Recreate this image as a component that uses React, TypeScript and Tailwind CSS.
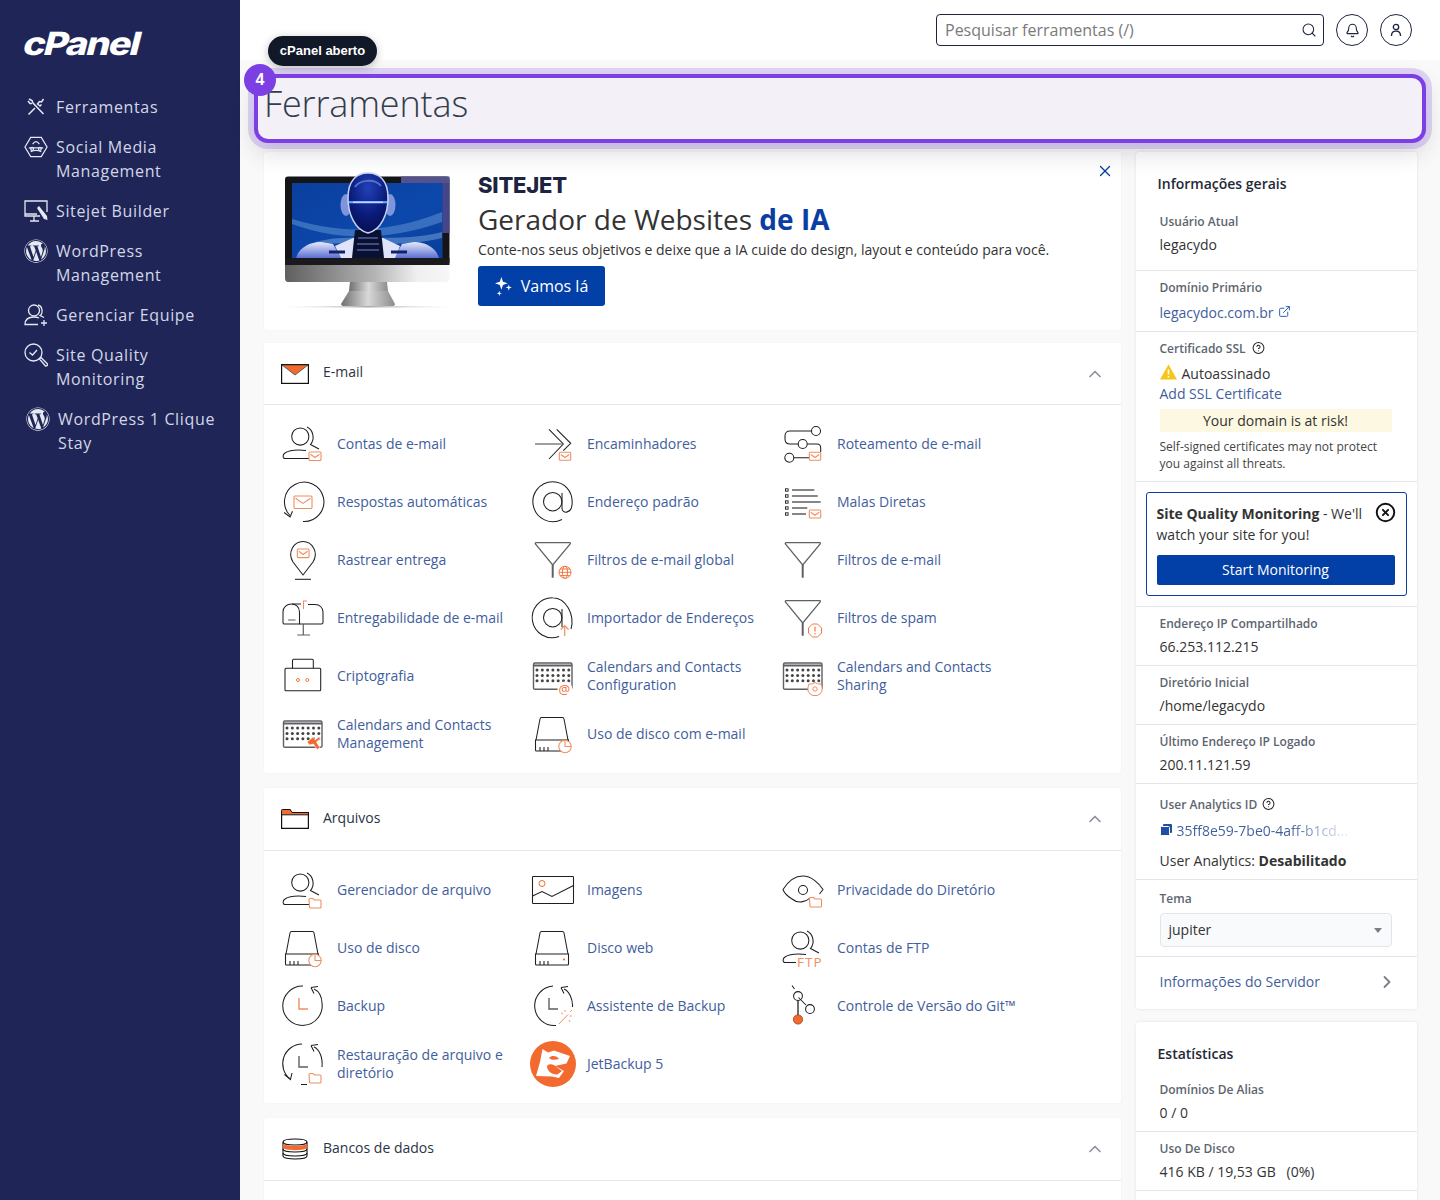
import { Bell, ChevronRight, ChevronUp, CircleHelp, CircleX, ExternalLink, Search, X } from "lucide-react";
import { FaWordpress } from "react-icons/fa";
import type { ReactNode } from "react";

const K = "#1f1f22";
const G = "#5f5f64";
const O = "#ee8f62";
const R = "#f26a2e";

// small orange overlays used by most of the tool icons
function Env({ x, y, w = 12, h = 8.5 }: { x: number; y: number; w?: number; h?: number }) {
  return (
    <g fill="#fff" stroke={O} strokeWidth="1.1">
      <rect x={x} y={y} width={w} height={h} rx="1" />
      <path d={`M${x + 1.5} ${y + 2.2} L${x + w / 2} ${y + h / 2 + 1.2} L${x + w - 1.5} ${y + 2.2}`} fill="none" />
    </g>
  );
}

function Folder({ x, y }: { x: number; y: number }) {
  return (
    <path
      d={`M${x} ${y + 1.5} a1 1 0 0 1 1 -1 h3 l1.5 1.5 h5.5 a1 1 0 0 1 1 1 v6 a1 1 0 0 1 -1 1 h-9.5 a1 1 0 0 1 -1 -1 z`}
      fill="#fff"
      stroke={O}
      strokeWidth="1.1"
    />
  );
}

function Person({ short }: { short?: boolean }) {
  return (
    <g fill="none" stroke={K} strokeWidth="1.05">
      <circle cx="18.3" cy="13.5" r="8.6" />
      <path d="M25 4 C31.5 7 33 16 28.5 21.5 L37 26" />
      <path d={short ? "M14 35.5 H3 C0.5 35.5 0.5 31.5 3 30 C7.5 27 14 26.5 24 27.5" : "M27 35.5 H3 C0.5 35.5 0.5 31.5 3 30 C7.5 27 14 26.5 24 27.5"} />
    </g>
  );
}

function Funnel() {
  return (
    <g fill="none">
      <path d="M4 3.7 H37.8 Q38.8 3.7 38.2 5 L20.7 26 L3.4 5 Q2.9 3.7 4 3.7 Z" stroke={G} strokeWidth="1.2" />
      <path d="M20.7 26 V38.7" stroke={G} strokeWidth="2" />
    </g>
  );
}

function Cal() {
  const dots = [];
  for (let r = 0; r < 3; r++) {
    for (let c = 0; c < 7; c++) {
      dots.push(<circle key={`${r}-${c}`} cx={5 + c * 5.3} cy={15 + r * 5.4} r="1.5" fill="#444" />);
    }
  }
  return (
    <g>
      <path d="M1.5 33 V9.5 Q1.5 8 3 8 H38.5 Q40 8 40 9.5 V33 Q40 34.2 38.5 34.2 H3 Q1.5 34.2 1.5 33 Z" fill="none" stroke={G} strokeWidth="1.4" />
      <path d="M1.5 10.5 H40" stroke={G} strokeWidth="1.8" />
      {dots}
    </g>
  );
}

function Disk() {
  return (
    <g fill="none" stroke={K} strokeWidth="1.05">
      <path d="M4 27 L8 6 Q8.3 4.5 9.5 4.5 H30.5 Q31.7 4.5 32 6 L36 27" />
      <path d="M3.5 27 H36.5 V37 Q36.5 38 35.5 38 H4.5 Q3.5 38 3.5 37 Z" />
      <path d="M8 38 V34 M12 38 V34 M16 38 V34" />
    </g>
  );
}

function Clock({ hand = K }: { hand?: string }) {
  return <path d="M17 13 V24 H26" fill="none" stroke={hand} strokeWidth="1.4" />;
}

function Wrap({ children }: { children: ReactNode }) {
  return (
    <svg width="42" height="42" viewBox="0 0 42 42" className="shrink-0 overflow-visible">
      {children}
    </svg>
  );
}

const icons: Record<string, ReactNode> = {
  contas: (
    <>
      <Person />
      <Env x={27} y={29} />
    </>
  ),
  respostas: (
    <>
      <path d="M8 34.5 A19.7 19.7 0 1 1 21 40.5" fill="none" stroke={K} strokeWidth="1.05" />
      <path d="M2.5 30.5 L7.5 36 L11 31" fill="none" stroke={K} strokeWidth="1.05" transform="rotate(-12 7 33)" />
      <Env x={12} y={15} w={18} h={12.5} />
    </>
  ),
  rastrear: (
    <>
      <path d="M21 36 L11 23 C5 13 12 2.5 21 2.5 C30 2.5 37 13 31 23 Z" fill="none" stroke={K} strokeWidth="1.05" />
      <path d="M13 40.3 H29" stroke={K} strokeWidth="1.05" />
      <Env x={15.3} y={10} w={11.7} h={8.6} />
    </>
  ),
  entrega: (
    <>
      <path d="M1 25.5 V15 C1 10 5 7 9.5 7 C14 7 17.5 10 17.5 15 V27 H2.5 Q1 27 1 25.5 Z" fill="none" stroke={K} strokeWidth="1.05" />
      <path d="M10 7 H19 M26 7.5 H33 C38 7.5 41 11 41 15 V25.5 Q41 27 39.5 27 H17.5" fill="none" stroke={K} strokeWidth="1.05" />
      <path d="M21.3 27 V38 M15.3 38 H28 M6 23 H13.5" stroke={G} strokeWidth="1.2" />
      <path d="M21.5 12 V4 H25" fill="none" stroke={O} strokeWidth="1.1" />
    </>
  ),
  cripto: (
    <>
      <path d="M10.5 13.3 V5.5 Q10.5 4.3 11.7 4.3 H30 Q31.3 4.3 31.3 5.5 V13.3" fill="none" stroke={K} strokeWidth="1.05" />
      <rect x="3" y="13.3" width="35.7" height="22.4" rx="1" fill="none" stroke={K} strokeWidth="1.05" />
      <circle cx="16" cy="25" r="1.5" fill="none" stroke={R} strokeWidth="0.9" />
      <circle cx="25.3" cy="25" r="1.5" fill="none" stroke={R} strokeWidth="0.9" />
    </>
  ),
  calManage: (
    <>
      <Cal />
      <path d="M25 29 L31 24 L33 27 L37 24 L38 26 L34.5 29 L38 35 L35 36.5 L31.5 31 L27.5 32 Z" fill={R} stroke="#fff" strokeWidth="0.6" />
    </>
  ),
  enc: (
    <g fill="none">
      <path d="M3 21 H29.7" stroke={G} strokeWidth="1.2" />
      <path d="M17 6.3 L31.3 21 L17 36" stroke={K} strokeWidth="1.05" />
      <path d="M24.7 6.3 L38.7 20.3 L31.3 27.7" stroke={K} strokeWidth="1.05" />
      <Env x={27.3} y={29.3} w={11.4} h={8} />
    </g>
  ),
  at: (
    <g fill="none" stroke={K} strokeWidth="1.05">
      <circle cx="20.7" cy="20.7" r="9.2" />
      <path d="M30 12 V27 C30 33 39 33 40 24 C41.5 10 32 0.7 20.7 0.7 A20 20 0 1 0 30 38.5" />
    </g>
  ),
  filtroGlobal: (
    <>
      <Funnel />
      <g fill="#fff" stroke={R} strokeWidth="0.9">
        <circle cx="33" cy="33.3" r="6" />
        <ellipse cx="33" cy="33.3" rx="2.6" ry="6" />
        <path d="M27 33.3 H39 M28 30 H38 M28 36.6 H38" />
      </g>
    </>
  ),
  importer: (
    <g fill="none" stroke={K} strokeWidth="1.05">
      <circle cx="20.7" cy="20.7" r="9.2" />
      <path d="M30 12 V30 M39 32 C43 18 34 0.7 20.7 0.7 A20 20 0 1 0 27 39.5" />
      <path d="M32.7 39 V28.5 M28.8 32.5 L32.7 28.5 L36.6 32.5" stroke={O} strokeWidth="1.2" />
    </g>
  ),
  calConfig: (
    <>
      <Cal />
      <circle cx="33" cy="34" r="7.5" fill="#fff" />
      <text x="26.6" y="38.6" fill={R} fontSize="13" fontFamily="'Open Sans', sans-serif">
        @
      </text>
    </>
  ),
  diskMail: (
    <>
      <Disk />
      <circle cx="33" cy="33.5" r="6.2" fill="#fff" stroke={O} strokeWidth="1.1" />
      <path d="M33 27.3 V33.5 H39.2" fill="none" stroke={O} strokeWidth="1.1" />
    </>
  ),
  rota: (
    <g fill="none" stroke={K} strokeWidth="1.05">
      <path d="M29.5 8 H8 Q3 8 3 13 V16 Q3 21 8 21 H16 M25.3 21 H35 Q38.7 21 38.7 25 V29 M12 34.7 H27" />
      <circle cx="34" cy="8" r="4.5" />
      <circle cx="20.7" cy="21" r="4.5" />
      <circle cx="7.3" cy="34.7" r="4.5" />
      <Env x={27.3} y={29.3} w={11.4} h={8} />
    </g>
  ),
  malas: (
    <g fill="none">
      {[9, 15, 21, 27, 33].map((y) => (
        <rect key={y} x="3.5" y={y - 1.2} width="2.6" height="2.4" stroke={K} strokeWidth="0.9" />
      ))}
      <path d="M10 9 H32.3 M10 15 H35.7 M10 21 H38.7 M10 27 H25.3 M10 33 H24" stroke={G} strokeWidth="1.4" />
      <Env x={27.3} y={29} w={11.4} h={8} />
    </g>
  ),
  filtro: <Funnel />,
  spam: (
    <>
      <Funnel />
      <path d="M30.5 27 H35.5 L39.5 31 V36 L35.5 40 H30.5 L26.5 36 V31 Z" fill="#fff" stroke={R} strokeWidth="0.9" />
      <path d="M33 29.7 V34.5 M33 36 V37.3" stroke={R} strokeWidth="1.1" />
    </>
  ),
  calShare: (
    <>
      <Cal />
      <path d="M33 27.5 L36 29 L39 29 L40 32 L40 36 L38 39 L35 40.5 L31 40.5 L28 39 L26 36 L26 32 L27 29 L30 29 Z" fill="#fff" stroke={O} strokeWidth="1" />
      <circle cx="33" cy="34" r="2.2" fill="none" stroke={O} strokeWidth="1" />
    </>
  ),
  gerenciador: (
    <>
      <Person />
      <Folder x={27} y={29} />
    </>
  ),
  imagens: (
    <g fill="none">
      <rect x="0.5" y="7.5" width="41" height="27" rx="0.8" stroke={K} strokeWidth="1.05" />
      <circle cx="10" cy="14.5" r="3" stroke={R} strokeWidth="1" />
      <path d="M0.5 27 L10 22.5 L20 27.5 L41.5 16.5" stroke={K} strokeWidth="1.05" />
    </g>
  ),
  privacidade: (
    <g fill="none">
      <path d="M28 29 C24 33 16 35 10 30 C6 27.5 2 23.5 1 20.5 C5 14 12 7 21 7 C29 7 37 14 41 20.5 L37.5 25" stroke={K} strokeWidth="1.05" />
      <circle cx="21" cy="21" r="4.5" stroke={K} strokeWidth="1.05" />
      <Folder x={27.5} y={28} />
    </g>
  ),
  usoDisco: (
    <>
      <Disk />
      <circle cx="33" cy="33.5" r="6.2" fill="#fff" stroke={O} strokeWidth="1.1" />
      <path d="M33 27.3 V33.5 H39.2" fill="none" stroke={O} strokeWidth="1.1" />
    </>
  ),
  discoWeb: (
    <>
      <Disk />
      <circle cx="32" cy="32.5" r="1.1" fill={R} />
    </>
  ),
  ftp: (
    <>
      <Person short />
      <text x="15" y="39.5" fill={O} fontSize="13.5" fontFamily="'Open Sans', sans-serif" letterSpacing="1">
        FTP
      </text>
    </>
  ),
  backup: (
    <g fill="none">
      <path d="M21 1 A19.7 19.7 0 1 0 40 18 C40 12 37 6 32 4" stroke={K} strokeWidth="1.05" />
      <path d="M29 2.5 L32 8.5 M29 2.5 L36 1.5" stroke={K} strokeWidth="1.05" />
      <Clock hand={O} />
    </g>
  ),
  assistente: (
    <g fill="none">
      <path d="M21 1 A19.7 19.7 0 1 0 24 40.5 M40.5 22 C41 14 37 6 32 4" stroke={K} strokeWidth="1.05" />
      <path d="M29 2.5 L32 8.5 M29 2.5 L36 1.5" stroke={K} strokeWidth="1.05" />
      <Clock hand={G} />
      <path d="M27 39 L36 29.5" stroke={O} strokeWidth="1" />
      <path d="M33 27 V25 M37.5 31 H40 M38 27 L40 25 M31 29 L29 28 M37 35 L38 37" stroke={O} strokeWidth="0.9" />
    </g>
  ),
  git: (
    <g fill="none">
      <path d="M10 0.5 L12.5 4 M16.5 12.5 L24 20" stroke={K} strokeWidth="1.05" />
      <path d="M16 15.5 V30" stroke={G} strokeWidth="1.8" />
      <circle cx="16" cy="11" r="4.4" stroke={K} strokeWidth="1.05" />
      <circle cx="28" cy="24" r="4.4" stroke={K} strokeWidth="1.05" />
      <circle cx="16" cy="34.5" r="4.6" fill={R} stroke="#9a3d14" strokeWidth="0.8" />
    </g>
  ),
  restaura: (
    <g fill="none">
      <path d="M20 1 A19.7 19.7 0 0 0 8 36" stroke={K} strokeWidth="1.05" />
      <path d="M2.5 31.5 L8.5 36.5 L10 30" stroke={K} strokeWidth="1.05" />
      <path d="M19 41.5 H25 M40 24 C41 14 37 6 32 4" stroke={K} strokeWidth="1.05" />
      <path d="M29 2.5 L32 8.5 M29 2.5 L36 1.5" stroke={K} strokeWidth="1.05" />
      <Clock hand={G} />
      <Folder x={27} y={30} />
    </g>
  ),
  jet: (
    <svg width="46" height="46" viewBox="0 0 46 46" className="shrink-0 -mx-[2px] -my-[2px]">
      <circle cx="23" cy="23" r="23" fill={R} />
      <path
        d="M6 35 L10 21 L12.5 8 L18 11.5 L24 9.5 L40 15 L36.5 22.5 L25 25 L34 30 L29 37 L22 35.5 Z"
        fill="#fff"
      />
      <path d="M19 17 C22 13.5 27 15 29 18 C25 19 22 19.5 19 17 Z" fill={R} />
      <path d="M17 25 C19 22 24 23 27 26.5 L32 30 L27.5 33.5 C22 34 17 30 17 25 Z" fill={R} />
    </svg>
  ),
};

type Tool = { icon: string; label: string };

const emailTools: Tool[] = [
  { icon: "contas", label: "Contas de e-mail" },
  { icon: "enc", label: "Encaminhadores" },
  { icon: "rota", label: "Roteamento de e-mail" },
  { icon: "respostas", label: "Respostas automáticas" },
  { icon: "at", label: "Endereço padrão" },
  { icon: "malas", label: "Malas Diretas" },
  { icon: "rastrear", label: "Rastrear entrega" },
  { icon: "filtroGlobal", label: "Filtros de e-mail global" },
  { icon: "filtro", label: "Filtros de e-mail" },
  { icon: "entrega", label: "Entregabilidade de e-mail" },
  { icon: "importer", label: "Importador de Endereços" },
  { icon: "spam", label: "Filtros de spam" },
  { icon: "cripto", label: "Criptografia" },
  { icon: "calConfig", label: "Calendars and Contacts Configuration" },
  { icon: "calShare", label: "Calendars and Contacts Sharing" },
  { icon: "calManage", label: "Calendars and Contacts Management" },
  { icon: "diskMail", label: "Uso de disco com e-mail" },
];

const fileTools: Tool[] = [
  { icon: "gerenciador", label: "Gerenciador de arquivo" },
  { icon: "imagens", label: "Imagens" },
  { icon: "privacidade", label: "Privacidade do Diretório" },
  { icon: "usoDisco", label: "Uso de disco" },
  { icon: "discoWeb", label: "Disco web" },
  { icon: "ftp", label: "Contas de FTP" },
  { icon: "backup", label: "Backup" },
  { icon: "assistente", label: "Assistente de Backup" },
  { icon: "git", label: "Controle de Versão do Git™" },
  { icon: "restaura", label: "Restauração de arquivo e diretório" },
  { icon: "jet", label: "JetBackup 5" },
];

function ToolGrid({ tools }: { tools: Tool[] }) {
  return (
    <div className="grid grid-cols-[250px_250px_250px] px-[18px] py-[10px]">
      {tools.map((t) => (
        <a key={t.label} className="flex h-[58px] items-center gap-[13px]">
          {t.icon === "jet" ? icons.jet : <Wrap>{icons[t.icon]}</Wrap>}
          <span className="w-[180px] text-[14px] leading-[18px] text-[#3f5e9c]">{t.label}</span>
        </a>
      ))}
    </div>
  );
}

function Section({ icon, title, first, children }: { icon: ReactNode; title: string; first?: boolean; children?: ReactNode }) {
  return (
    <section className="rounded-[3px] bg-white shadow-[0_0_2px_rgba(0,0,0,0.05)]">
      <div className={`flex items-center gap-[14px] border-b border-[#e5e6ea] pr-[16px] pl-[17px] ${first ? "h-[62px]" : "h-[63px]"}`}>
        <span className="flex w-[28px] justify-center">{icon}</span>
        <span className={`flex-1 text-[14px] text-[#2b3445] ${first ? "mb-[4px]" : "mb-[3px]"}`}>{title}</span>
        <ChevronUp size={20} strokeWidth={2} className="text-[#8d929b]" />
      </div>
      {children}
    </section>
  );
}

function Sparkle() {
  return (
    <svg width="17" height="19" viewBox="0 0 16 18" fill="#fff">
      <path d="M6 0 L7.5 4.5 L12 6 L7.5 7.5 L6 12 L4.5 7.5 L0 6 L4.5 4.5 Z" />
      <path d="M13 7 L13.7 9.3 L16 10 L13.7 10.7 L13 13 L12.3 10.7 L10 10 L12.3 9.3 Z" />
      <path d="M4 13 L4.6 14.9 L6.5 15.5 L4.6 16.1 L4 18 L3.4 16.1 L1.5 15.5 L3.4 14.9 Z" />
    </svg>
  );
}

function RobotMonitor() {
  return (
    <svg width="168" height="140" viewBox="0 0 168 140" className="shrink-0">
      <defs>
        <linearGradient id="chin" x1="0" x2="1" y1="0" y2="0">
          <stop offset="0" stopColor="#5f5f5f" />
          <stop offset="0.55" stopColor="#b5b5b5" />
          <stop offset="0.8" stopColor="#efefef" />
          <stop offset="1" stopColor="#f7f7f7" />
        </linearGradient>
        <linearGradient id="foot" x1="0" x2="1" y1="0" y2="0">
          <stop offset="0" stopColor="#6e6e6e" />
          <stop offset="0.5" stopColor="#d8d8d8" />
          <stop offset="1" stopColor="#8c8c8c" />
        </linearGradient>
        <linearGradient id="scr" x1="0" x2="1" y1="0" y2="1">
          <stop offset="0" stopColor="#0a3f9e" />
          <stop offset="0.6" stopColor="#0c48ab" />
          <stop offset="1" stopColor="#0a3d99" />
        </linearGradient>
        <radialGradient id="helmet" cx="0.5" cy="0.25" r="0.85">
          <stop offset="0" stopColor="#2241b8" />
          <stop offset="0.55" stopColor="#0a1a78" />
          <stop offset="1" stopColor="#050d40" />
        </radialGradient>
        <linearGradient id="shoulder" x1="0" x2="0" y1="0" y2="1">
          <stop offset="0" stopColor="#e6eafc" />
          <stop offset="1" stopColor="#5a6fd0" />
        </linearGradient>
        <linearGradient id="shadowline" x1="0" x2="1" y1="0" y2="0">
          <stop offset="0" stopColor="#ddd" stopOpacity="0" />
          <stop offset="0.5" stopColor="#aaa" />
          <stop offset="1" stopColor="#ddd" stopOpacity="0" />
        </linearGradient>
      </defs>
      <rect x="0" y="4.5" width="164.5" height="88" rx="3" fill="#141419" />
      <rect x="116" y="4.5" width="48.5" height="7" fill="#53528c" />
      <rect x="157" y="11" width="7.5" height="50" fill="#45458a" />
      <rect x="7" y="11" width="150.5" height="75" fill="url(#scr)" />
      <path d="M7 47 C45 58 90 66 157 40 L157 50 C100 70 50 68 7 52 Z" fill="#6ea2dc" opacity="0.45" />
      <path d="M30 70 C70 60 110 72 157 60 L157 66 C110 78 70 66 30 74 Z" fill="#9cc0ea" opacity="0.4" />
      <path d="M11 86 C14 76 24 70 36 70 L48 72 L56 86 Z" fill="url(#shoulder)" />
      <path d="M154 86 C151 76 141 70 129 70 L117 72 L109 86 Z" fill="url(#shoulder)" />
      <path d="M50 74 L68 66 L98 66 L115 74 L110 86 H56 Z" fill="#dfe4fa" />
      <path d="M70 58 H96 L99 86 H67 Z" fill="#0a1030" />
      <path d="M73 66 H93 M72 72 H94 M72 78 H94" stroke="#6f86d8" strokeWidth="1" />
      <path d="M44 80 H60 M106 80 H122" stroke="#14206e" strokeWidth="3" />
      <ellipse cx="61" cy="33" rx="5.5" ry="11" fill="#7e95dc" />
      <ellipse cx="105" cy="33" rx="5.5" ry="11" fill="#7e95dc" />
      <path d="M63 26 C63 8 72 1 83 1 C94 1 103 8 103 26 C103 42 96 58 83 61 C70 58 63 42 63 26 Z" fill="url(#helmet)" stroke="#c5d2f7" strokeWidth="1.5" />
      <path d="M70 15 C74 8 90 6 96 14" fill="none" stroke="#6c8ce0" strokeWidth="2" opacity="0.7" />
      <rect x="64" y="29" width="38" height="2.4" fill="#5a9cff" />
      <rect x="68" y="29.7" width="30" height="1" fill="#eef5ff" />
      <rect x="0" y="86" width="164.5" height="7" fill="#1a1a1e" />
      <path d="M0 93 H164.5 V106 Q164.5 110 161 110 H3 Q0 110 0 106 Z" fill="url(#chin)" />
      <path d="M65 110 H102 L103 119 H64 Z" fill="url(#foot)" />
      <path d="M64 119 H103 L110 132 Q110 134 107 134 H60 Q56 134 56 132 Z" fill="url(#foot)" />
      <rect x="0" y="134" width="166" height="1.5" fill="url(#shadowline)" />
    </svg>
  );
}

function Label({ children }: { children: ReactNode }) {
  return <div className="text-[12px] leading-[16px] font-semibold text-[#5d6570]">{children}</div>;
}

function Stat({ label, value, extra }: { label: string; value: string; extra?: string }) {
  return (
    <div className="h-[59px] border-b border-[#e3e5e8] px-[24px] pt-[9px]">
      <Label>{label}</Label>
      <div className="mt-[5px] text-[14px] leading-[20px] text-[#333]">
        {value}
        {extra}
      </div>
    </div>
  );
}

function Nav({ icon, text, shift }: { icon: ReactNode; text: string; shift?: boolean }) {
  return (
    <a className={`flex gap-[8px] text-[16px] leading-[24px] tracking-[0.65px] text-[#d3d6e6] ${shift ? "pl-[2px]" : ""}`}>
      <span className="flex h-[24px] w-[24px] shrink-0 items-center justify-center">{icon}</span>
      <span>{text}</span>
    </a>
  );
}

const sideStroke = { fill: "none", stroke: "#e6e8f2", strokeWidth: 1.3 };

export default function App() {
  return (
    <div className="flex h-[1200px] w-[1440px] overflow-hidden bg-[#f9f9fa] font-['Open_Sans',sans-serif]">
      <aside className="w-[240px] shrink-0 bg-[#1f2657] pl-[24px]">
        <div className="h-[95px] pt-[24px]">
          {/* logo kept as live text */}
          <span className="inline-block origin-left -skew-x-12 scale-x-[1.18] font-['Inter',sans-serif] text-[32px] leading-[40px] font-extrabold tracking-[-1.5px] text-white">
            cPanel
          </span>
        </div>
        <nav className="flex w-[200px] flex-col gap-[16px]">
          <Nav
            text="Ferramentas"
            icon={
              <svg width="20" height="20" viewBox="0 0 20 20" fill="none" stroke="#e6e8f2" strokeWidth="1.5">
                <path d="M3 2 L6 3.5 L7 6 L17.5 17" />
                <path d="M2 4 L4 6.5 L6 6.5" />
                <path d="M17.5 2 L15.5 5 L13.5 4.5 L11.5 7 L14 9 L15.5 7.5 M9 11 L2.5 17.5" />
              </svg>
            }
          />
          <Nav
            text="Social Media Management"
            icon={
              <svg width="25" height="24" viewBox="0 0 25 24" {...sideStroke}>
                <path d="M1 12 L7 2 H18 L24 12 L18 22 H7 Z" />
                <path d="M9 9 Q12.5 4 16 9 M5 13 H20 M7 17 Q12.5 14 18 17" />
                <circle cx="8.5" cy="14" r="1.5" />
                <circle cx="16.5" cy="14" r="1.5" />
              </svg>
            }
          />
          <Nav
            text="Sitejet Builder"
            icon={
              <svg width="24" height="24" viewBox="0 0 24 24" {...sideStroke}>
                <path d="M23 13 V2 H1 V17 H16 M6 22 H15 M10 17 V22 M1 15 H13" />
                <path d="M13 9 L15 7 L23 17 L23.5 21 L20 20 Z" fill="#e6e8f2" stroke="none" />
              </svg>
            }
          />
          <Nav text="WordPress Management" icon={<FaWordpress size={24} color="#e6e8f2" />} />
          <Nav
            text="Gerenciar Equipe"
            icon={
              <svg width="24" height="24" viewBox="0 0 24 24" {...sideStroke}>
                <circle cx="10" cy="7.5" r="5.5" />
                <path d="M14 2 C19 3 19 11 16 12.5 L20 14.5" />
                <path d="M14 21.5 H1 C1 16 5 14 10 14 C12 14 14 14.5 15 15" />
                <path d="M20 17 V23 M17 20 H23" />
              </svg>
            }
          />
          <Nav
            text="Site Quality Monitoring"
            icon={
              <svg width="24" height="24" viewBox="0 0 24 24" {...sideStroke}>
                <circle cx="9.5" cy="9.5" r="8.5" />
                <path d="M5.5 9.5 L8.5 12 L13 7" />
                <path d="M15.5 16 L17 14.5 L23.5 21 Q24 23 21.5 23 Z" />
              </svg>
            }
          />
          <Nav text="WordPress 1 Clique Stay" icon={<FaWordpress size={24} color="#e6e8f2" />} shift />
        </nav>
      </aside>

      <main className="min-w-0 flex-1">
        <header className="flex h-[60px] items-center justify-end gap-[12px] bg-white pr-[28px]">
          <div className="relative w-[388px]">
            <input
              placeholder="Pesquisar ferramentas (/)"
              className="h-[32px] w-full rounded-[4px] border border-[#1e2440] pr-[30px] pl-[8px] text-[16px] text-[#333] placeholder:text-[#7a7a7a]"
            />
            <Search size={16} strokeWidth={1.6} className="absolute top-[8px] right-[7px] text-[#1e2440]" />
          </div>
          <span className="flex h-[32px] w-[32px] items-center justify-center rounded-full border border-[#1e2440]">
            <Bell size={15} strokeWidth={1.8} className="text-[#1e2440]" />
          </span>
          <span className="flex h-[32px] w-[32px] items-center justify-center rounded-full border border-[#1e2440]">
            <svg width="14" height="14" viewBox="0 0 14 14" fill="none" stroke="#1e2440" strokeWidth="1.3">
              <circle cx="7" cy="4" r="2.7" />
              <path d="M2.5 13 C2.5 9.5 4.5 8.2 7 8.2 C9.5 8.2 11.5 9.5 11.5 13" />
            </svg>
          </span>
        </header>

        <div className="relative z-10 mx-[14px] mt-[14px] h-[69px] rounded-[14px] border-[4px] border-[#7c3fe4] bg-[#f3f0f8] pl-[6px] shadow-[0_0_0_6px_rgba(124,63,228,0.2),0_10px_24px_rgba(0,0,0,0.14)]">
          <h1 className="pt-[2px] text-[36px] leading-[48px] font-light tracking-[-0.15px] text-[#323c4b]">Ferramentas</h1>
          <span className="absolute top-[-42px] left-[10px] flex h-[30px] w-[109px] items-center justify-center rounded-full bg-[#111827] font-['Liberation_Sans',sans-serif] text-[13px] font-bold text-white shadow-[0_2px_8px_rgba(0,0,0,0.25)]">
            cPanel aberto
          </span>
          <span className="absolute top-[-14px] left-[-14px] flex h-[32px] w-[32px] items-center justify-center rounded-full bg-[#7c3fe4] font-['Liberation_Sans',sans-serif] text-[16px] font-bold text-white">
            4
          </span>
        </div>

        <div className="mt-[9px] flex gap-[14.5px] pl-[24px]">
          <div className="w-[857px] shrink-0">
            <div className="relative flex h-[178px] gap-[25px] rounded-[3px] bg-white pl-[21px] shadow-[0_0_2px_rgba(0,0,0,0.05)]">
              <div className="pt-[20px]">
                <RobotMonitor />
              </div>
              <div className="pt-[19px]">
                <div className="font-['Inter',sans-serif] text-[22px] leading-[28px] font-extrabold tracking-[-0.2px] text-[#1d2440]">SITEJET</div>
                <div className="text-[28px] leading-[40px] text-[#333]">
                  Gerador de Websites <b className="font-bold text-[#0a3ea4]">de IA</b>
                </div>
                <p className="mt-[1px] text-[14px] leading-[20px] text-[#333]">
                  Conte-nos seus objetivos e deixe que a IA cuide do design, layout e conteúdo para você.
                </p>
                <button className="mt-[6px] flex h-[40px] w-[127px] items-center justify-center gap-[9px] rounded-[3px] bg-[#023fa6] text-[16px] text-white">
                  <Sparkle />
                  Vamos lá
                </button>
              </div>
              <X size={18} strokeWidth={1.8} className="absolute top-[10px] right-[7px] text-[#0a3ea4]" />
            </div>

            <div className="mt-[13px]">
              <Section
                first
                title="E-mail"
                icon={
                  <svg width="28" height="20" viewBox="0 0 28 20">
                    <rect x="0.6" y="0.6" width="26.8" height="18.8" fill="#fff" stroke="#111" strokeWidth="1.2" />
                    <path d="M1 1 H27 L14 11 Z" fill={R} stroke="#333" strokeWidth="0.7" />
                  </svg>
                }
              >
                <ToolGrid tools={emailTools} />
              </Section>
            </div>

            <div className="mt-[15px]">
              <Section
                title="Arquivos"
                icon={
                  <svg width="28" height="20" viewBox="0 0 28 20">
                    <path d="M0.6 2 Q0.6 0.6 2 0.6 H9 L11 3.5 H27.4 V19.4 H0.6 Z" fill="#fff" stroke="#111" strokeWidth="1.2" />
                    <path d="M1 1 H8.8 L10.8 4 H27 V5.6 H1 Z" fill={R} />
                    <path d="M0.6 5.8 H27.4" stroke="#111" strokeWidth="1" />
                  </svg>
                }
              >
                <ToolGrid tools={fileTools} />
              </Section>
            </div>

            <div className="mt-[15px]">
              <Section
                title="Bancos de dados"
                icon={
                  <svg width="26" height="22" viewBox="0 0 26 22" fill="#fff" stroke="#111" strokeWidth="1.1">
                    <path d="M1 4 C1 0 25 0 25 4 V18 C25 22 1 22 1 18 Z" />
                    <path d="M1 5 C1 9 25 9 25 5 V9.5 C25 13 1 13 1 9.5 Z" fill={R} stroke="none" />
                    <path d="M1 4 C1 8 25 8 25 4 M1 11 C1 15 25 15 25 11 M1 15 C1 19 25 19 25 15" fill="none" />
                  </svg>
                }
              >
                <div className="h-[120px]" />
              </Section>
            </div>
          </div>

          <div className="w-[281px] shrink-0">
            <div className="rounded-[3px] bg-white shadow-[0_0_3px_rgba(0,0,0,0.1)]">
              <div className="h-[119px] border-b border-[#e3e5e8] pt-[22px]">
                <div className="pl-[22px] text-[14px] leading-[20px] font-semibold text-[#1f2937]">Informações gerais</div>
                <div className="mt-[20px] pl-[24px]">
                  <Label>Usuário Atual</Label>
                  <div className="mt-[5px] text-[14px] leading-[20px] text-[#333]">legacydo</div>
                </div>
              </div>
              <div className="h-[61px] border-b border-[#e3e5e8] px-[24px] pt-[9px]">
                <Label>Domínio Primário</Label>
                <div className="mt-[7px] flex items-center gap-[5px] text-[14px] leading-[20px] text-[#3f5e9c]">
                  legacydoc.com.br
                  <ExternalLink size={13} strokeWidth={1.8} className="mb-[4px] text-[#2b5cb0]" />
                </div>
              </div>
              <div className="h-[150px] border-b border-[#e3e5e8] px-[24px] pt-[9px]">
                <div className="flex h-[16px] items-center gap-[6px]">
                  <Label>Certificado SSL</Label>
                  <CircleHelp size={13} strokeWidth={1.9} className="-translate-y-[1.5px] text-[#222]" />
                </div>
                <div className="mt-[7px] flex items-center gap-[5px] text-[14px] leading-[20px] text-[#333]">
                  <svg width="17" height="16" viewBox="0 0 17 15" className="-translate-y-[2px]">
                    <path d="M8.5 0 L17 15 H0 Z" fill="#f5c518" />
                    <path d="M8.5 5 V10 M8.5 11.5 V13" stroke="#fff" strokeWidth="1.6" />
                  </svg>
                  Autoassinado
                </div>
                <div className="text-[14px] leading-[20px] text-[#3f5e9c]">Add SSL Certificate</div>
                <div className="mt-[5px] flex h-[23px] w-[232px] items-center justify-center bg-[#fdf8e1] text-[14px] text-[#333]">
                  Your domain is at risk!
                </div>
                <p className="mt-[6px] text-[12px] leading-[17px] text-[#444]">
                  Self-signed certificates may not protect you against all threats.
                </p>
              </div>
              <div className="h-[125px] border-b border-[#e3e5e8] px-[10px] pt-[10px]">
                <div className="relative h-[104px] rounded-[3px] border border-[#0a3ea4] px-[10px] pt-[10px]">
                  <p className="w-[216px] text-[14px] leading-[21px] text-[#333]">
                    <b className="font-bold">Site Quality Monitoring</b> - We'll watch your site for you!
                  </p>
                  <CircleX size={21} strokeWidth={2.2} className="absolute top-[9px] right-[10px] text-[#111]" />
                  <button className="mt-[10px] h-[30px] w-[238px] rounded-[2px] bg-[#023fa6] pb-[2px] text-[14px] text-white">Start Monitoring</button>
                </div>
              </div>
              <Stat label="Endereço IP Compartilhado" value="66.253.112.215" />
              <Stat label="Diretório Inicial" value="/home/legacydo" />
              <Stat label="Último Endereço IP Logado" value="200.11.121.59" />
              <div className="h-[96px] border-b border-[#e3e5e8] px-[24px] pt-[13px]">
                <div className="flex h-[16px] items-center gap-[5px]">
                  <Label>User Analytics ID</Label>
                  <CircleHelp size={13} strokeWidth={1.9} className="-translate-y-[1.5px] text-[#222]" />
                </div>
                <div className="mt-[8px] flex items-center gap-[5px] text-[14px] leading-[20px]">
                  <svg width="12" height="12" viewBox="0 0 12 12" className="mb-[3px]">
                    <rect x="3" y="0" width="9" height="9" rx="1" fill="#1f4ea3" />
                    <rect x="0.5" y="2.5" width="9" height="9" rx="1" fill="#1f4ea3" stroke="#fff" />
                  </svg>
                  <span className="bg-[linear-gradient(90deg,#3f5e9c_65%,#e3e8f2_98%)] bg-clip-text text-transparent">35ff8e59-7be0-4aff-b1cd...</span>
                </div>
                <div className="mt-[10px] text-[14px] leading-[20px] text-[#333]">
                  User Analytics: <b className="font-bold">Desabilitado</b>
                </div>
              </div>
              <div className="h-[77px] border-b border-[#e3e5e8] px-[24px] pt-[11px]">
                <Label>Tema</Label>
                <div className="mt-[6px] flex h-[34px] w-[232px] items-center justify-between rounded-[4px] border border-[#e2e6ec] bg-[#f8fafc] pr-[9px] pb-[2px] pl-[8px] text-[14px] text-[#333]">
                  jupiter
                  <span className="mt-[2px] h-0 w-0 border-x-[4px] border-t-[5px] border-x-transparent border-t-[#7a7f87]" />
                </div>
              </div>
              <div className="flex h-[52px] items-center justify-between pr-[20px] pb-[2px] pl-[24px] text-[14px] text-[#3f5e9c]">
                <span className="mb-[2px]">Informações do Servidor</span>
                <ChevronRight size={20} strokeWidth={2.2} className="text-[#7a808a]" />
              </div>
            </div>

            <div className="mt-[13px] rounded-[3px] bg-white shadow-[0_0_3px_rgba(0,0,0,0.1)]">
              <div className="h-[110px] border-b border-[#e3e5e8] pt-[22px]">
                <div className="pl-[22px] text-[14px] leading-[20px] font-semibold text-[#1f2937]">Estatísticas</div>
                <div className="mt-[18px] pl-[24px]">
                  <Label>Domínios De Alias</Label>
                  <div className="mt-[5px] text-[14px] leading-[20px] text-[#333]">0 / 0</div>
                </div>
              </div>
              <Stat label="Uso De Disco" value="416 KB / 19,53 GB" extra={"\u00a0\u00a0\u00a0(0%)"} />
              <div className="h-[40px]" />
            </div>
          </div>
        </div>
      </main>
    </div>
  );
}
